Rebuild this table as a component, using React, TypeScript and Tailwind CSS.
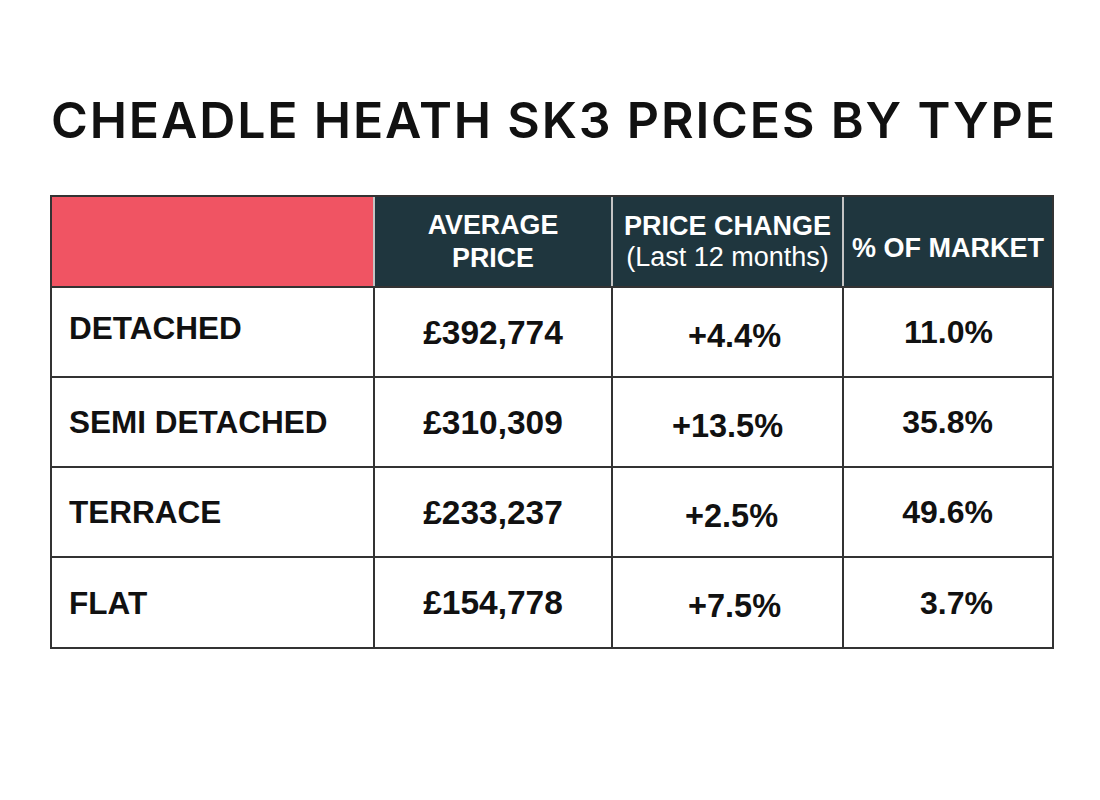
import React from "react";

const rows = [
  { label: "DETACHED", price: "£392,774", change: "+4.4%", share: "11.0%", cx: "translate-x-[7px]" },
  { label: "SEMI DETACHED", price: "£310,309", change: "+13.5%", share: "35.8%", cx: "translate-x-[0px]" },
  { label: "TERRACE", price: "£233,237", change: "+2.5%", share: "49.6%", cx: "translate-x-[4px]" },
  { label: "FLAT", price: "£154,778", change: "+7.5%", share: "3.7%", cx: "translate-x-[7px]" },
];

export default function App() {
  const font = { fontFamily: '"Liberation Sans", Arial, sans-serif' };
  return (
    <div className="w-[1100px] h-[800px] bg-white overflow-hidden">
      <div className="pt-[95px] pl-[51px]">
        <h1
          className="text-[50px] leading-[50px] font-semibold text-[#111] tracking-[1.85px] whitespace-nowrap"
          style={{ fontFamily: 'Inter, "Noto Sans", sans-serif' }}
        >
          CHEADLE HEATH SK3 PRICES BY TYPE
        </h1>
      </div>

      <div className="mt-[50px] ml-[50px] w-[1004px] border-2 border-[#333]" style={font}>
        <div className="grid grid-cols-[321px_238px_231px_210px]">
          <div className="h-[89px] bg-[#f05463]" />
          <div className="h-[89px] bg-[#1f363e] border-l-2 border-[#c4c4c4] flex flex-col items-center justify-center text-white font-bold text-[26.8px] leading-[33px]">
            <span>AVERAGE</span>
            <span>PRICE</span>
          </div>
          <div className="h-[89px] bg-[#1f363e] border-l-2 border-[#c4c4c4] flex flex-col items-center justify-center text-white text-[27px] leading-[31px]">
            <span className="font-bold">PRICE CHANGE</span>
            <span className="font-normal">(Last 12 months)</span>
          </div>
          <div className="h-[89px] bg-[#1f363e] border-l-2 border-[#c4c4c4] flex items-center justify-center text-white font-bold text-[27px] leading-[31px] pt-[14px]">
            <span>% OF MARKET</span>
          </div>

          {rows.map((r, i) => {
            const h = i === rows.length - 1 ? "h-[91px]" : "h-[90px]";
            return (
              <React.Fragment key={r.label}>
                <div className={`${h} border-t-2 border-[#333] flex items-center pl-[17px] text-[31.5px] font-bold text-[#111]`}>
                  <span className={i === 0 ? "-translate-y-[3px]" : "translate-y-[1px]"}>{r.label}</span>
                </div>
                <div className={`${h} border-t-2 border-l-2 border-[#333] flex items-center justify-center text-[33.5px] font-bold text-[#111]`}>
                  <span className="translate-y-[1px]">{r.price}</span>
                </div>
                <div className={`${h} border-t-2 border-l-2 border-[#333] flex items-center justify-center text-[32.5px] font-bold text-[#111]`}>
                  <span className={`${r.cx} translate-y-[4px] inline-block`}>{r.change}</span>
                </div>
                <div className={`${h} border-t-2 border-l-2 border-[#333] flex items-center justify-end pr-[59px] text-[32px] font-bold text-[#111]`}>
                  <span>{r.share}</span>
                </div>
              </React.Fragment>
            );
          })}
        </div>
      </div>
    </div>
  );
}
